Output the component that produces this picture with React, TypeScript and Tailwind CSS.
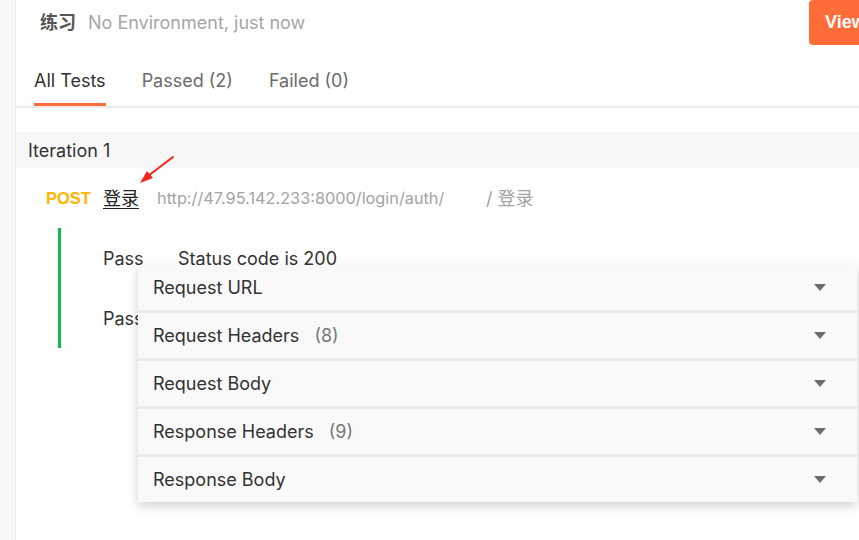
import React from 'react';

const sections = [
  { label: 'Request URL' },
  { label: 'Request Headers', count: 8 },
  { label: 'Request Body' },
  { label: 'Response Headers', count: 9 },
  { label: 'Response Body' },
];

const Caret = () => (
  <svg width="12" height="8" viewBox="0 0 12 8" className="shrink-0">
    <path d="M0 0 L12 0 L6 7 Z" fill="#6b6b6b" />
  </svg>
);

export default function App() {
  return (
    <div className="flex w-[859px] h-[540px] overflow-hidden bg-white text-[18px] text-[#333] font-['Inter','Noto_Sans_CJK_SC',sans-serif]">
      <div className="w-[16px] shrink-0 bg-[#f8f8f8] border-r border-[#ececec]" />

      <div className="relative flex-1 flex flex-col min-w-0">
        {/* Header */}
        <div className="flex h-[45px] items-center">
          <div className="flex-1 flex items-center pl-[24px] gap-[12px]">
            <span className="font-semibold text-[#555]">练习</span>
            <span className="text-[#a6a6a6]">No Environment, just now</span>
          </div>
          <button className="w-[80px] h-[45px] shrink-0 -mr-[30px] rounded-[4px] bg-[#ff6c37] pl-[16px] text-left font-bold text-white font-['Liberation_Sans',sans-serif]">
            View
          </button>
        </div>

        {/* Tabs */}
        <div className="flex h-[63px] items-end gap-[36px] pl-[18px] border-b-2 border-[#ebebeb]">
          <div className="pb-[10px] leading-[24px] border-b-[3px] border-[#ff6c37] text-[#333]">All Tests</div>
          <div className="pb-[10px] leading-[24px] border-b-[3px] border-transparent text-[#6b6b6b]">Passed (2)</div>
          <div className="pb-[10px] leading-[24px] border-b-[3px] border-transparent text-[#6b6b6b]">Failed (0)</div>
        </div>

        {/* Iteration */}
        <div className="mt-[24px] flex h-[36px] items-center bg-[#f7f7f7] pl-[12px]">Iteration 1</div>

        <div className="flex h-[60px] items-center pl-[30px]">
          <span className="font-bold text-[#ffb400] w-[57px] text-[16.5px] font-['Liberation_Sans',sans-serif]">POST</span>
          <span className="underline underline-offset-[3px] text-[#222] w-[54px]">登录</span>
          <span className="text-[#a3a3a3] w-[329px] whitespace-nowrap text-[16.3px]">http://47.95.142.233:8000/login/auth/</span>
          <span className="text-[#a3a3a3]">/ 登录</span>
        </div>

        <div className="ml-[42px] border-l-[3px] border-[#0cbb52] pl-[42px] flex flex-col">
          <div className="flex h-[60px] items-center">
            <span className="w-[75px]">Pass</span>
            <span>Status code is 200</span>
          </div>
          <div className="flex h-[60px] items-center">
            <span className="w-[75px]">Pass</span>
          </div>
        </div>

        {/* Red arrow annotation */}
        <svg className="absolute left-[102px] top-[150px]" width="60" height="40" viewBox="0 0 60 40">
          <path d="M55 7 L30 26" stroke="#f2261b" strokeWidth="2" strokeLinecap="round" />
          <path d="M22 33 L29 21 L35 28 Z" fill="#f2261b" />
        </svg>

        {/* Dropdown of sections */}
        <div className="absolute left-[122px] top-[265px] w-[719px] flex flex-col gap-[3px] bg-[#ececec] shadow-[0_4px_10px_rgba(0,0,0,0.18)]">
          {sections.map((s) => (
            <div key={s.label} className="flex h-[45px] items-center justify-between bg-[#f9f9f9] pl-[15px] pr-[31px]">
              <div className="flex items-center">
                <span>{s.label}</span>
                {s.count !== undefined && <span className="ml-[15px] text-[#777]">({s.count})</span>}
              </div>
              <Caret />
            </div>
          ))}
        </div>
      </div>
    </div>
  );
}
